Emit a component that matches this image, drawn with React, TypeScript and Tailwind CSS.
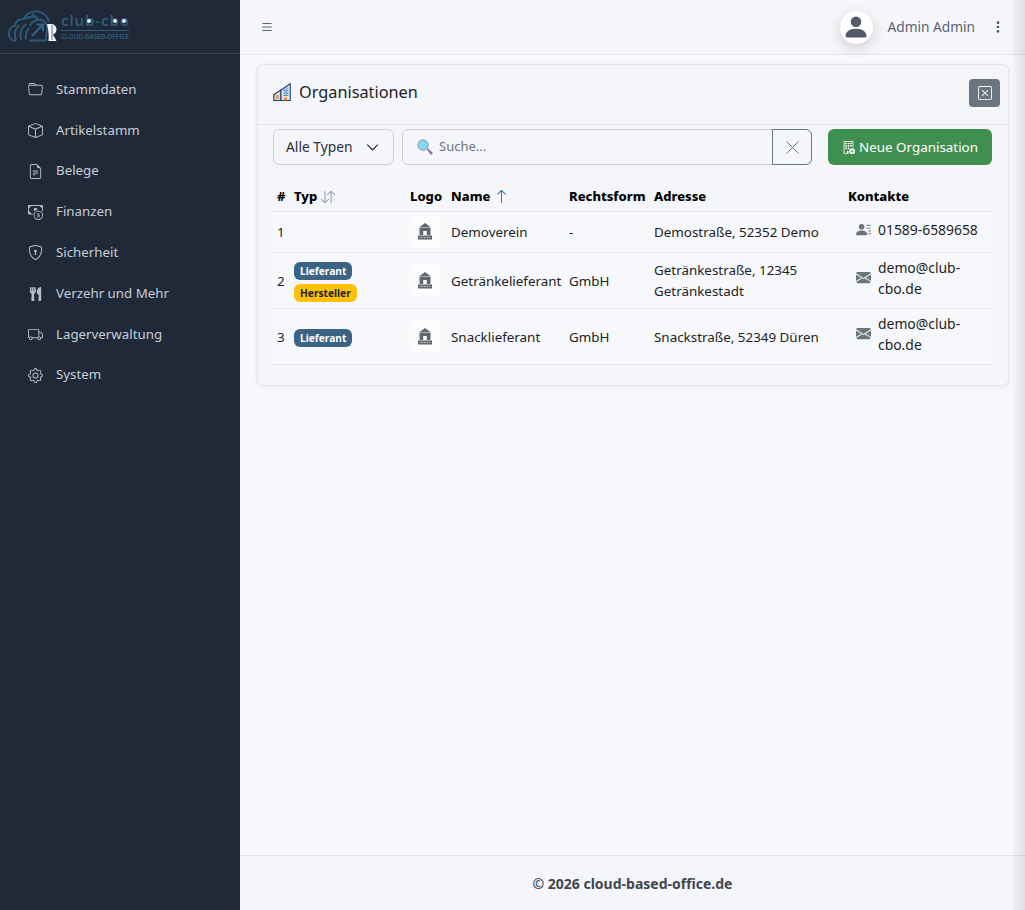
import React from "react";
import {
  BsFolder, BsBox, BsFileEarmarkText, BsCashCoin, BsShieldLock, BsTruck, BsGear, BsList,
  BsThreeDotsVertical, BsPersonFill, BsXSquare, BsChevronDown, BsBuildingAdd,
  BsPersonLinesFill, BsEnvelopeFill, BsArrowDownUp, BsArrowUp,
} from "react-icons/bs";
import { FaUtensils } from "react-icons/fa";

const nav: [React.ComponentType<{ className?: string }>, string, string][] = [
  [BsFolder, "Stammdaten", "w-[15px] h-[15px]"],
  [BsBox, "Artikelstamm", "w-[15px] h-[15px]"],
  [BsFileEarmarkText, "Belege", "w-[15px] h-[15px]"],
  [BsCashCoin, "Finanzen", "w-[15px] h-[15px]"],
  [BsShieldLock, "Sicherheit", "w-[15px] h-[15px]"],
  [FaUtensils, "Verzehr und Mehr", "w-[15px] h-[14px]"],
  [BsTruck, "Lagerverwaltung", "w-[15px] h-[15px]"],
  [BsGear, "System", "w-[15px] h-[15px]"],
];

function Logo() {
  return (
    <div className="flex items-center h-[54px] pl-[8px] pb-[2px] border-b border-[#374151]">
      <svg viewBox="0 0 49 32" className="w-[49px] h-[32px] shrink-0" fill="none">
        <path d="M8 31C3 31 0.800 27 0.800 23.500C0.800 19.500 3.500 16.500 7 15.500C7.500 11 11.500 8.500 15.500 9C18 3.500 24 0.500 30 1.500C36 2.500 40 7 41 12" stroke="#2c5878" strokeWidth="2" />
        <path d="M8 30.500C6 25 7 19 11 15M13 30C11.500 24 13 18 18 14M18 30C17 25 18.500 21 21 18M16 9C20 7 25 6 30 8M24 3.500L30 9.500" stroke="#2c5878" strokeWidth="2" />
        <path d="M21 30.500H38C37 26 40 22 39 16C38 11.500 34 9 29 10C26 11 23 13 22 16" stroke="#2c5878" strokeWidth="2" />
        <path d="M24 26L34 15.500M28.500 14.500H35V21" stroke="#33658a" strokeWidth="2.200" />
        <path d="M39 14H43C46.500 14 48.500 16.500 48.500 19.500C48.500 22 47 24 45 24.500L48.500 31H40.500C41 26 40.500 20 39 14Z" fill="#f4f6fb" />
        <path d="M44 15V30" stroke="#2c5878" strokeWidth="0.800" />
      </svg>
      <div className="ml-[4px] flex flex-col w-[68px]">
        <div className="relative h-[17px] leading-[17px] text-[15px] font-semibold text-[#2f5c7e] tracking-[0.9px] whitespace-nowrap">
          club-cbo
          <span className="absolute left-[26px] top-[7px] w-[4px] h-[4px] rounded-full bg-[#e8eef4]" />
          <span className="absolute left-[52px] top-[7px] w-[4px] h-[4px] rounded-full bg-[#e8eef4]" />
          <span className="absolute left-[61px] top-[7px] w-[4px] h-[4px] rounded-full bg-[#e8eef4]" />
        </div>
        <div className="border-t border-[#2f5c7e] mt-[1px] pt-[1px] h-[10px] leading-[9px] text-[6.400px] font-semibold text-[#2f5c7e] whitespace-nowrap">
          CLOUD-BASED-OFFICE
        </div>
      </div>
    </div>
  );
}

function Sidebar() {
  return (
    <aside className="w-[240px] shrink-0 bg-[#1f2937] h-full">
      <Logo />
      <nav className="pt-[15.300px]">
        {nav.map(([Icon, label, size]) => (
          <div key={label} className="flex items-center h-[40.8px] pl-[28px] text-[#c8ced8] text-[13.300px]">
            <Icon className={`${size} text-[#b6bcc7]`} />
            <span className="ml-[13px]">{label}</span>
          </div>
        ))}
      </nav>
    </aside>
  );
}

function OrgIcon({ className }: { className?: string }) {
  return (
    <svg viewBox="0 0 18 18" className={className} fill="none">
      <path d="M0.800 11.500L8 7V17.500H0.800Z" fill="#f0d5b5" stroke="#1d3c78" strokeWidth="1.100" />
      <path d="M8 7L17.200 0.800V17.500H8Z" fill="#dfe8f3" stroke="#1d3c78" strokeWidth="1.100" />
      <path d="M10 7.500H15.500M10 10H15.500M10 12.500H15.500M12 5V13M14 4V13" stroke="#5f8fc8" strokeWidth="0.900" />
      <path d="M2.500 13H6M2.500 15H6" stroke="#a9825a" strokeWidth="1" />
      <path d="M11 14.500H14V17.500H11Z" fill="#e98a2c" />
    </svg>
  );
}

function SearchIcon() {
  return (
    <svg viewBox="0 0 16 16" className="w-[16px] h-[16px]">
      <path d="M9.500 10L10.500 9L15.500 13.500A1.500 1.500 0 0 1 13.500 15.500Z" fill="#9a6fa0" />
      <circle cx="6" cy="6" r="5.200" fill="#84d8ea" stroke="#7fa3c0" strokeWidth="1" />
    </svg>
  );
}

function BankIcon() {
  return (
    <svg viewBox="0 0 16 18" className="w-[16px] h-[18px] mt-[-1px]" fill="#5f6670">
      <path d="M8 1L14 5.500H2Z" />
      <path fillRule="evenodd" d="M2.500 6H13.500V13H9.800V9H6.200V13H2.500Z" />
      <rect x="1" y="13.500" width="14" height="4" />
      <path d="M2.500 15.500H13.500" stroke="#d7dade" strokeWidth="0.800" strokeDasharray="1 0.500" />
    </svg>
  );
}

function Th({ children }: { children?: React.ReactNode }) {
  return <th className="text-left font-extrabold text-[13px] text-black px-[4px] h-[31px] pt-[3px] whitespace-nowrap">{children}</th>;
}
function Td({ children, className = "pt-[5px] pb-[3px]" }: { children?: React.ReactNode; className?: string }) {
  return <td className={`px-[4px] align-middle text-[13.400px] leading-[21px] text-[#1c1f24] ${className}`}>{children}</td>;
}

function LogoCell() {
  return (
    <div className="w-[32px] h-[32px] ml-[-1px] bg-[#fcfcfd] rounded-[6px] flex items-center justify-center">
      <BankIcon />
    </div>
  );
}

function Badge({ children, yellow }: { children: string; yellow?: boolean }) {
  return (
    <span className={`inline-flex items-center h-[18px] px-[6px] rounded-[6px] text-[10.200px] font-bold leading-none w-fit ${yellow ? "bg-[#ffc107] text-[#1c1f24]" : "bg-[#3a6384] text-white"}`}>
      {children}
    </span>
  );
}

function Contact({ kind, text }: { kind: "phone" | "mail"; text: string }) {
  const Icon = kind === "phone" ? BsPersonLinesFill : BsEnvelopeFill;
  return (
    <div className="flex items-center pl-[8px] mb-[5px] text-[13.900px]">
      <Icon className="w-[15px] h-[15px] text-[#6c757d] shrink-0" />
      <span className="ml-[7px]">{text}</span>
    </div>
  );
}

const rows = [
  { n: 1, types: [] as [string, boolean][], name: "Demoverein", form: "-", addr: "Demostraße, 52352 Demo", kind: "phone" as const, contact: "01589-6589658" },
  { n: 2, types: [["Lieferant", false], ["Hersteller", true]] as [string, boolean][], name: "Getränkelieferant", form: "GmbH", addr: "Getränkestraße, 12345 Getränkestadt", kind: "mail" as const, contact: "demo@club-cbo.de" },
  { n: 3, types: [["Lieferant", false]] as [string, boolean][], name: "Snacklieferant", form: "GmbH", addr: "Snackstraße, 52349 Düren", kind: "mail" as const, contact: "demo@club-cbo.de" },
];

function Table() {
  return (
    <table className="w-[719px] table-fixed border-collapse mt-[15px]">
      <colgroup>
        <col className="w-[17px]" />
        <col className="w-[116px]" />
        <col className="w-[41px]" />
        <col className="w-[118px]" />
        <col className="w-[85px]" />
        <col className="w-[194px]" />
        <col className="w-[148px]" />
      </colgroup>
      <thead>
        <tr className="border-b border-[#e2e5ea]">
          <Th>#</Th>
          <Th>
            <span className="inline-flex items-center">
              Typ
              <BsArrowDownUp className="ml-[4px] w-[14px] h-[14px] text-[#7d8ea3]" />
            </span>
          </Th>
          <Th>Logo</Th>
          <Th>
            <span className="inline-flex items-center">
              Name
              <BsArrowUp className="ml-[4px] w-[15px] h-[15px] text-[#1f6fb5]" />
            </span>
          </Th>
          <Th>Rechtsform</Th>
          <Th>Adresse</Th>
          <Th>Kontakte</Th>
        </tr>
      </thead>
      <tbody>
        {rows.map((r) => (
          <tr key={r.n} className="border-b border-[#e2e5ea] bg-[#f7f8fb]">
            <Td>{r.n}</Td>
            <Td className="py-[4px]">
              <div className="flex flex-col gap-[4px] mt-[4px]">
                {r.types.map(([t, y]) => (
                  <Badge key={t} yellow={y}>{t}</Badge>
                ))}
              </div>
            </Td>
            <Td className="py-[4px]"><LogoCell /></Td>
            <Td className="pt-[5px] pb-[3px] whitespace-nowrap">{r.name}</Td>
            <Td>{r.form}</Td>
            <Td>{r.addr}</Td>
            <Td className="py-[4px]"><Contact kind={r.kind} text={r.contact} /></Td>
          </tr>
        ))}
      </tbody>
    </table>
  );
}

export default function App() {
  return (
    <div className="flex h-[910px] w-full overflow-hidden font-['Noto_Sans',sans-serif] bg-[#f8f9fc] text-[14px]">
      <Sidebar />
      <div className="relative flex-1 flex flex-col min-w-0">
        <header className="h-[55px] shrink-0 flex items-center justify-between pl-[20px] pr-[20px] bg-[#f4f6fa] border-b border-[#e2e5ea]">
          <BsList className="w-[14px] h-[14px] text-[#5a6270]" />
          <div className="flex items-center">
            <div className="w-[33px] h-[33px] rounded-full bg-white shadow-[0_4px_14px_rgba(0,0,0,0.16)] flex items-center justify-center">
              <BsPersonFill className="w-[28px] h-[28px] text-[#555b66]" />
            </div>
            <span className="ml-[15px] text-[#5a6270] text-[13.700px]">Admin Admin</span>
            <BsThreeDotsVertical className="ml-[16px] w-[14px] h-[14px] text-[#4c5360]" />
          </div>
        </header>
        <main className="flex-1 pt-[9px] px-[16.500px] min-h-0">
          <section className="h-[322px] rounded-[6px] border border-[#e2e5ea] bg-[#f4f6fa] shadow-[0_1px_4px_rgba(0,0,0,0.08)]">
            <div className="h-[60px] flex items-center justify-between pl-[15.500px] pr-[7.500px] pb-[3px] border-b border-[#e2e5ea]">
              <div className="flex items-center mb-[2px]">
                <OrgIcon className="w-[18px] h-[18px]" />
                <h1 className="ml-[8px] text-[16.300px] text-[#1c1f24]">Organisationen</h1>
              </div>
              <button className="w-[31px] h-[28px] rounded-[4px] bg-[#6c757d] flex items-center justify-center">
                <BsXSquare className="w-[14px] h-[14px] text-white" />
              </button>
            </div>
            <div className="pl-[15.500px] pr-[15px] pt-[4px]">
              <div className="flex items-center h-[36px]">
                <div className="w-[121px] h-[36px] border border-[#ced1d8] rounded-[6px] flex items-center justify-between pl-[12px] pr-[14px] text-[#2b2f36] text-[13.800px]">
                  <span>Alle Typen</span>
                  <BsChevronDown className="w-[13px] h-[13px] text-[#212529] stroke-[0.6px]" />
                </div>
                <div className="ml-[8px] w-[371px] h-[36px] border border-[#ced1d8] rounded-l-[6px] flex items-center pl-[14px] text-[#6c757d] text-[13px]">
                  <SearchIcon />
                  <span className="ml-[6px]">Suche...</span>
                </div>
                <button className="w-[40px] h-[36px] border border-[#6c757d] rounded-r-[6px] ml-[-1px] flex items-center justify-center">
                  <svg viewBox="0 0 13 13" className="w-[13px] h-[13px]" fill="none">
                    <path d="M0.500 0.500L12.500 12.500M12.500 0.500L0.500 12.500" stroke="#6c757d" strokeWidth="1" />
                  </svg>
                </button>
                <button className="ml-[16px] w-[164px] h-[36px] rounded-[6px] bg-[#3f8f50] text-white flex items-center justify-center text-[13.400px]">
                  <BsBuildingAdd className="w-[13px] h-[13px] mt-[1px]" />
                  <span className="ml-[4px]">Neue Organisation</span>
                </button>
              </div>
              <Table />
            </div>
          </section>
        </main>
        <footer className="h-[55px] shrink-0 flex items-center justify-center bg-[#f4f6fa] border-t border-[#e2e5ea] text-[14px] font-bold text-[#3f4650]">
          © 2026 cloud-based-office.de
        </footer>
        <div className="absolute top-0 right-0 bottom-0 w-[14px] bg-gradient-to-r from-transparent to-black/10 pointer-events-none" />
      </div>
    </div>
  );
}
